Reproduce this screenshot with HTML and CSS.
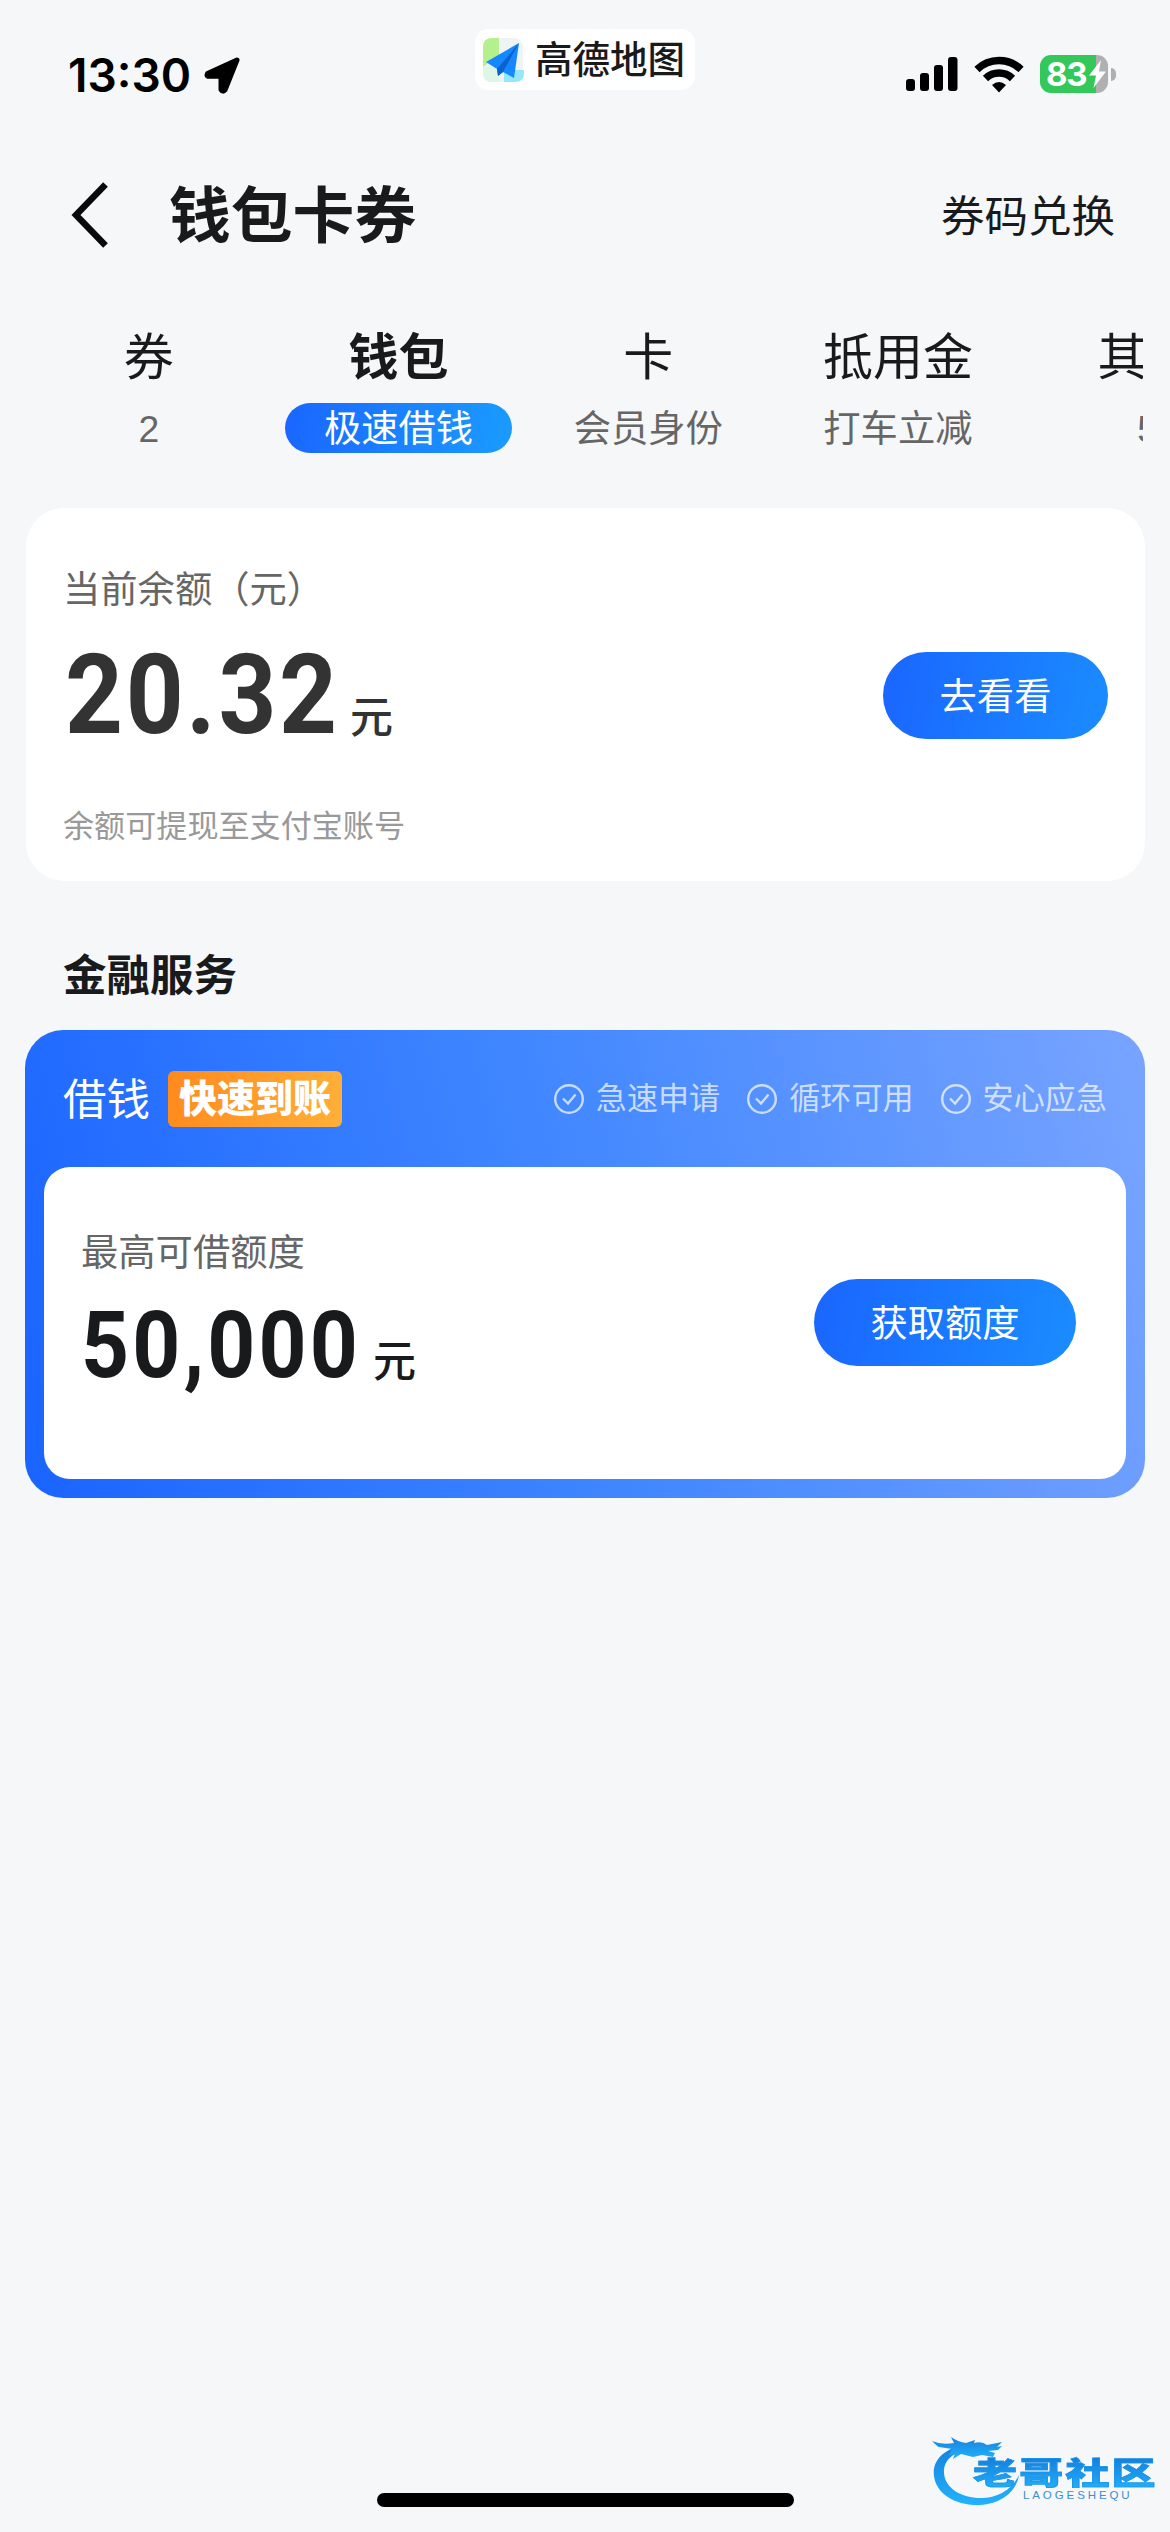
FILE: index.html
```html
<!DOCTYPE html>
<html lang="zh-CN">
<head>
<meta charset="utf-8">
<title>钱包卡券</title>
<link rel="stylesheet" href="styles.css">
</head>
<body>
<header class="status">
  <div class="status-left">
    <span class="time">13:30</span>
    <svg class="locate" width="38" height="38" viewBox="0 0 38 38"><path d="M34 4 4.500 17.500Q3.500 19.500 5 20.300L18 20.300 18 33.500Q20 36.500 22 34Z" fill="#000" stroke="#000" stroke-width="5" stroke-linejoin="round"/></svg>
  </div>
  <div class="app-pill">
    <svg width="46" height="46" viewBox="0 0 46 46">
      <rect x="2" y="1" width="40" height="44" rx="9" fill="#eef3f4"/>
      <path d="M11 1h7v17L2 30V10Q2 1 11 1Z" fill="#b4f08e"/>
      <path d="M2 30h16v15h-7Q2 45 2 36Z" fill="#ddf6e8"/>
      <path d="M23 45V33h20v3q0 9-9 9Z" fill="#96e6fb"/>
      <path d="M38 6 5 25l11 7 1 7 5-4 11 6Z" fill="#1688ff"/>
      <path d="M38 6 16 32l1 7 5-4Z" fill="#0a62cf"/>
    </svg>
    <span class="app-name">高德地图</span>
  </div>
  <div class="status-right">
    <svg width="52" height="36" viewBox="0 0 52 36"><rect x="0" y="23" width="9" height="12" rx="3"/><rect x="14" y="17" width="9" height="18" rx="3"/><rect x="28" y="9" width="9" height="26" rx="3"/><rect x="42" y="1" width="9.500" height="34" rx="3"/></svg>
    <svg width="50" height="37" viewBox="0 0 50 37"><path d="M3 13.500a31.500 31.500 0 0 1 44 0" fill="none" stroke="#000" stroke-width="7.500"/><path d="M11.500 22.500a19.500 19.500 0 0 1 27 0" fill="none" stroke="#000" stroke-width="7.500"/><path d="M18 29q7-6 14 0l-7 7.500Z"/></svg>
    <div class="battery">
      <div class="battery-body"><span>83</span><svg width="18" height="28" viewBox="0 0 18 28"><path d="M12 0 0 15.500h7L4.500 28 17 11.500h-7Z" fill="#fff"/></svg></div>
      <div class="battery-nub"></div>
    </div>
  </div>
</header>

<nav class="navbar">
  <svg class="back" width="38" height="68" viewBox="0 0 38 68"><path d="M34.500 3.500 5 34l29.500 30.500" fill="none" stroke="#0a0a0b" stroke-width="6.500"/></svg>
  <h1 class="title">钱包卡券</h1>
  <span class="redeem">券码兑换</span>
</nav>

<div class="tabs">
  <div class="tab"><span class="tab-name">券</span><span class="tab-sub">2</span></div>
  <div class="tab active"><span class="tab-name">钱包</span><span class="tab-sub">极速借钱</span></div>
  <div class="tab"><span class="tab-name">卡</span><span class="tab-sub">会员身份</span></div>
  <div class="tab"><span class="tab-name">抵用金</span><span class="tab-sub">打车立减</span></div>
  <div class="tab"><span class="tab-name">其他</span><span class="tab-sub">5</span></div>
</div>

<section class="balance">
  <div class="balance-info">
    <div class="label">当前余额（元）</div>
    <div class="amount"><span class="num">20.32</span><span class="unit">元</span></div>
    <div class="note">余额可提现至支付宝账号</div>
  </div>
  <div class="btn btn-view">去看看</div>
</section>

<h2 class="section-title">金融服务</h2>

<section class="loan">
  <div class="loan-head">
    <span class="loan-name">借钱</span>
    <span class="loan-tag">快速到账</span>
    <div class="perks">
      <span class="perk"><svg width="30" height="30" viewBox="0 0 30 30"><circle cx="15" cy="15" r="13.800"/><path d="m9 14.500 5 5 7.500-9"/></svg>急速申请</span>
      <span class="perk"><svg width="30" height="30" viewBox="0 0 30 30"><circle cx="15" cy="15" r="13.800"/><path d="m9 14.500 5 5 7.500-9"/></svg>循环可用</span>
      <span class="perk"><svg width="30" height="30" viewBox="0 0 30 30"><circle cx="15" cy="15" r="13.800"/><path d="m9 14.500 5 5 7.500-9"/></svg>安心应急</span>
    </div>
  </div>
  <div class="loan-body">
    <div class="loan-info">
      <div class="label">最高可借额度</div>
      <div class="amount"><span class="num">50,000</span><span class="unit">元</span></div>
    </div>
    <div class="btn btn-quota">获取额度</div>
  </div>
</section>

<div class="home-indicator"></div>

<div class="watermark">
  <svg class="swoosh" width="92" height="72" viewBox="0 0 92 72">
    <defs><linearGradient id="wave" x1="0" y1="0" x2="0" y2="1"><stop offset="0" stop-color="#1680dc"/><stop offset="1" stop-color="#22b2fc"/></linearGradient></defs>
    <g fill="url(#wave)">
      <path d="M31 9C11 14 1 26 3 40c2 18 22 30 46 29 20-1 36-12 39-30-7 15-22 23-38 23-20 0-36-10-37-25C12 26 20 18 33 14Z"/>
      <path d="M1 5q9 4 22 2l-3-6q7 5 15 6l9-3-1 3q8-2 13 2l15-3-5 5 5-1-4 4-10 1 7 2-2 4-11-2-9 2-12-3-8 5 2-6-6 3 3-7-13-2Q7 11 1 5Z"/>
    </g>
  </svg>
  <div class="mark-name">老哥社区</div>
  <div class="mark-latin">LAOGESHEQU</div>
</div>
</body>
</html>
```
FILE: styles.css
```css
* { box-sizing: border-box; }

body {
  margin: 0;
  width: 1170px;
  height: 2532px;
  position: relative;
  display: flex;
  flex-direction: column;
  overflow: hidden;
  background: #f5f7f9;
  color: #191a1c;
  font-family: "Liberation Sans", "Noto Sans CJK SC", sans-serif;
}

svg { display: block; flex: none; }

.status {
  display: grid;
  grid-template-columns: 1fr 220px 1fr;
  height: 150px;
  padding: 29px 54px 0 68px;
  align-items: start;
}
.status-left { display: flex; align-items: center; gap: 12px; padding-top: 27px; }
.time {
  font: 600 46px/38px Inter, sans-serif;
  color: #000;
}
.app-pill {
  display: flex;
  align-items: center;
  gap: 8px;
  width: 220px;
  height: 61px;
  margin-left: -7px;
  padding-left: 6px;
  border-radius: 14px;
  background: #fff;
  white-space: nowrap;
}
.app-name { font-size: 37.500px; font-weight: 500; line-height: 62px; }
.status-right { display: flex; justify-content: flex-end; align-items: center; gap: 16px; padding-top: 26px; }
.battery { display: flex; align-items: center; gap: 3px; }
.battery-body {
  display: flex;
  align-items: center;
  gap: 3px;
  width: 68px;
  height: 38px;
  padding-left: 6px;
  border-radius: 11px;
  background: linear-gradient(90deg, #34c759 56px, #b0b0b2 56px);
  color: #fff;
  font: 700 33px/38px Inter, sans-serif;
  letter-spacing: -1.200px;
}
.battery-nub { width: 5px; height: 13px; border-radius: 0 6px 6px 0; background: #b0b0b2; }

.navbar {
  display: flex;
  align-items: center;
  height: 130px;
  padding: 0 55px 0 71px;
}
.title { margin: 0 0 0 60px; padding-top: 3px; font-size: 61.800px; line-height: 130px; font-weight: 700; }
.redeem { margin-left: auto; font-size: 43.500px; line-height: 130px; padding-top: 4px; }

.tabs {
  display: flex;
  height: 228px;
  margin: 0 27px 0 24px;
  padding-top: 48px;
  overflow: hidden;
}
.tab {
  flex: none;
  width: 249.700px;
  display: flex;
  flex-direction: column;
  align-items: center;
}
.tab-name { font-size: 50px; line-height: 61px; }
.tab-sub {
  margin-top: 14px;
  height: 50px;
  padding: 0 39px;
  border-radius: 25px;
  font-size: 37.300px;
  line-height: 53px;
  color: #666;
}
.active .tab-name { font-weight: 700; }
.active .tab-sub { background: linear-gradient(100deg, #1a66ff, #1a9cff); color: #fff; }

.balance {
  display: flex;
  justify-content: space-between;
  height: 373px;
  margin: 0 25px 0 26px;
  padding: 56px 37px 0;
  border-radius: 38px;
  background: #fff;
}
.label { font-size: 37.300px; line-height: 53px; color: #666; }
.amount { display: flex; align-items: baseline; font-weight: 700; white-space: nowrap; }
.num { display: inline-block; font-family: Roboto, sans-serif; transform: scaleX(0.91); transform-origin: 0 50%; }
.unit { font-size: 43px; font-weight: 500; }
.balance .amount { height: 120px; margin-top: 18px; line-height: 120px; color: #333; }
.balance .num { width: 289px; margin-left: 2px; font-size: 111px; letter-spacing: 3px; }
.balance .unit { margin-left: -4px; }
.note { margin-top: 42px; font-size: 31.100px; line-height: 60px; color: #999; }
.btn {
  flex: none;
  height: 87px;
  border-radius: 44px;
  background: linear-gradient(100deg, #1a66ff, #1a8cff);
  color: #fff;
  font-size: 37.300px;
  line-height: 91px;
  text-align: center;
}
.btn-view { width: 225px; margin-top: 88px; }

.section-title { margin: 64px 0 0 63px; font-size: 43.500px; line-height: 62px; font-weight: 700; }

.loan {
  height: 468px;
  margin: 23px 25px 0;
  padding: 0 19px;
  border-radius: 38px;
  background: linear-gradient(76deg, #1a64ff 0%, #3f86ff 48%, #78a4ff 100%);
}
.loan-head { display: flex; align-items: center; height: 137px; padding: 0 19px; color: #fff; }
.loan-name { font-size: 43.500px; line-height: 60px; padding-top: 3px; }
.loan-tag {
  width: 174px;
  height: 56px;
  margin-left: 18px;
  border-radius: 6px;
  background: linear-gradient(100deg, #ff8a1c, #ffb03a);
  font-size: 38px;
  line-height: 57px;
  font-weight: 900;
  text-align: center;
}
.perks { display: flex; gap: 27px; margin-left: auto; }
.perk {
  display: flex;
  align-items: center;
  gap: 12px;
  font-size: 31.100px;
  line-height: 52px;
  color: rgba(255, 255, 255, 0.7);
}
.perk svg { fill: none; stroke: currentColor; stroke-width: 2.400; }
.loan-body {
  display: flex;
  justify-content: space-between;
  height: 312px;
  padding: 60px 50px 0 37px;
  border-radius: 26px;
  background: #fff;
}
.loan-body .amount { height: 120px; margin-top: 6px; line-height: 120px; }
.loan-body .num { width: 300px; font-size: 92px; letter-spacing: 3.500px; }
.loan-body .unit { margin-left: -8px; }
.btn-quota { width: 262px; margin-top: 52px; }

.home-indicator {
  width: 417px;
  height: 14px;
  margin: auto auto 25px;
  border-radius: 7px;
  background: #000;
}

.watermark { position: absolute; left: 931px; top: 2436px; width: 230px; height: 74px; }
.swoosh { position: absolute; left: 0; top: 0; }
.mark-name {
  position: absolute;
  left: 42px;
  top: 15px;
  font-size: 44px;
  font-weight: 900;
  line-height: 44px;
  letter-spacing: 2.200px;
  white-space: nowrap;
  transform: scaleY(0.7);
  background: linear-gradient(#147fdc, #22aefa);
  background-clip: text;
  color: transparent;
  -webkit-text-stroke: 1px #1b93e8;
}
.mark-latin {
  position: absolute;
  left: 92px;
  top: 53px;
  font-size: 11.500px;
  line-height: 12px;
  letter-spacing: 2.900px;
  color: #3a8fd0;
}
```
